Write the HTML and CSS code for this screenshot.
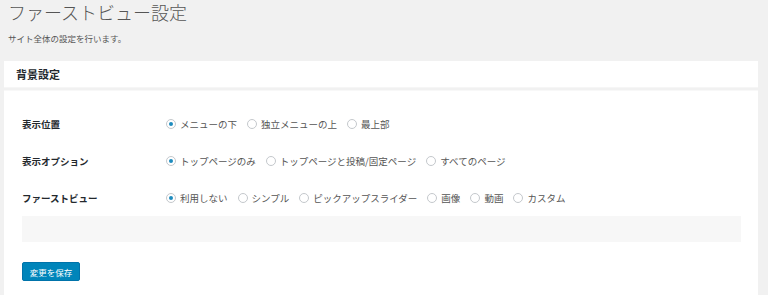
FILE: index.html
```html
<!DOCTYPE html>
<html lang="ja">
<head>
    <meta charset="UTF-8">
    <meta name="viewport" content="width=device-width, initial-scale=1.0">
    <title>ファーストビュー設定</title>
    <link rel="stylesheet" href="styles.css">
</head>
<body>
    <div class="wrap">
        <h1>ファーストビュー設定</h1>
        <p class="description">サイト全体の設定を行います。</p>

        <div class="postbox">
            <h2 class="hndle">背景設定</h2>
            <div class="inside">
                <div class="form-row">
                    <div class="label">表示位置</div>
                    <div class="options">
                        <label class="radio"><span class="dot checked"></span>メニューの下</label>
                        <label class="radio"><span class="dot"></span>独立メニューの上</label>
                        <label class="radio"><span class="dot"></span>最上部</label>
                    </div>
                </div>
                <div class="form-row">
                    <div class="label">表示オプション</div>
                    <div class="options">
                        <label class="radio"><span class="dot checked"></span>トップページのみ</label>
                        <label class="radio"><span class="dot"></span>トップページと投稿/固定ページ</label>
                        <label class="radio"><span class="dot"></span>すべてのページ</label>
                    </div>
                </div>
                <div class="form-row">
                    <div class="label">ファーストビュー</div>
                    <div class="options">
                        <label class="radio"><span class="dot checked"></span>利用しない</label>
                        <label class="radio"><span class="dot"></span>シンプル</label>
                        <label class="radio"><span class="dot"></span>ピックアップスライダー</label>
                        <label class="radio"><span class="dot"></span>画像</label>
                        <label class="radio"><span class="dot"></span>動画</label>
                        <label class="radio"><span class="dot"></span>カスタム</label>
                    </div>
                </div>

                <div class="sub-settings"></div>

                <button class="button-primary">変更を保存</button>
            </div>
        </div>
    </div>
</body>
</html>
```

FILE: styles.css
```css
body {
    font-family: "Noto Sans CJK JP", "Noto Sans", sans-serif;
    margin: 0;
    background-color: #f1f1f1;
    color: #444;
    overflow: hidden;
}

.wrap {
    padding: 0 10px 0 4px;
}

h1 {
    font-size: 18px;
    font-weight: 300;
    line-height: 24px;
    color: #555;
    margin: 0 0 0 4px;
}

.description {
    font-size: 8.5px;
    line-height: 12px;
    color: #555;
    margin: 8px 0 0 4px;
}

.postbox {
    margin-top: 17px;
}

.hndle {
    background-color: #fff;
    font-size: 11px;
    font-weight: bold;
    color: #23282d;
    height: 26px;
    line-height: 26px;
    margin: 0;
    padding-left: 12px;
    border-bottom: 1px solid #f6f6f6;
}

.inside {
    background-color: #fff;
    margin-top: 2px;
    padding: 14px 17px 20px 18px;
    border-top: 1px solid #f8f8f8;
}

.form-row {
    display: flex;
    align-items: center;
    height: 37px;
}

.label {
    width: 144px;
    font-size: 9.5px;
    font-weight: bold;
    color: #23282d;
}

.options {
    display: flex;
    align-items: center;
    gap: 10px;
    font-size: 9.5px;
    color: #555;
}

.radio {
    display: flex;
    align-items: center;
    gap: 4px;
}

.dot {
    width: 10px;
    height: 10px;
    border: 1px solid #c4c8cc;
    border-radius: 50%;
    box-sizing: border-box;
    display: flex;
    align-items: center;
    justify-content: center;
    background-color: #fff;
}

.dot.checked::after {
    content: "";
    width: 4px;
    height: 4px;
    border-radius: 50%;
    background-color: #1e8cbe;
}

.sub-settings {
    height: 26px;
    background-color: #f7f7f7;
}

.button-primary {
    margin-top: 20px;
    background-color: #0085ba;
    color: #fff;
    border: 1px solid #0073aa;
    border-radius: 2px;
    font-family: inherit;
    font-size: 8.5px;
    width: 58px;
    height: 19px;
    padding: 0;
}
```
